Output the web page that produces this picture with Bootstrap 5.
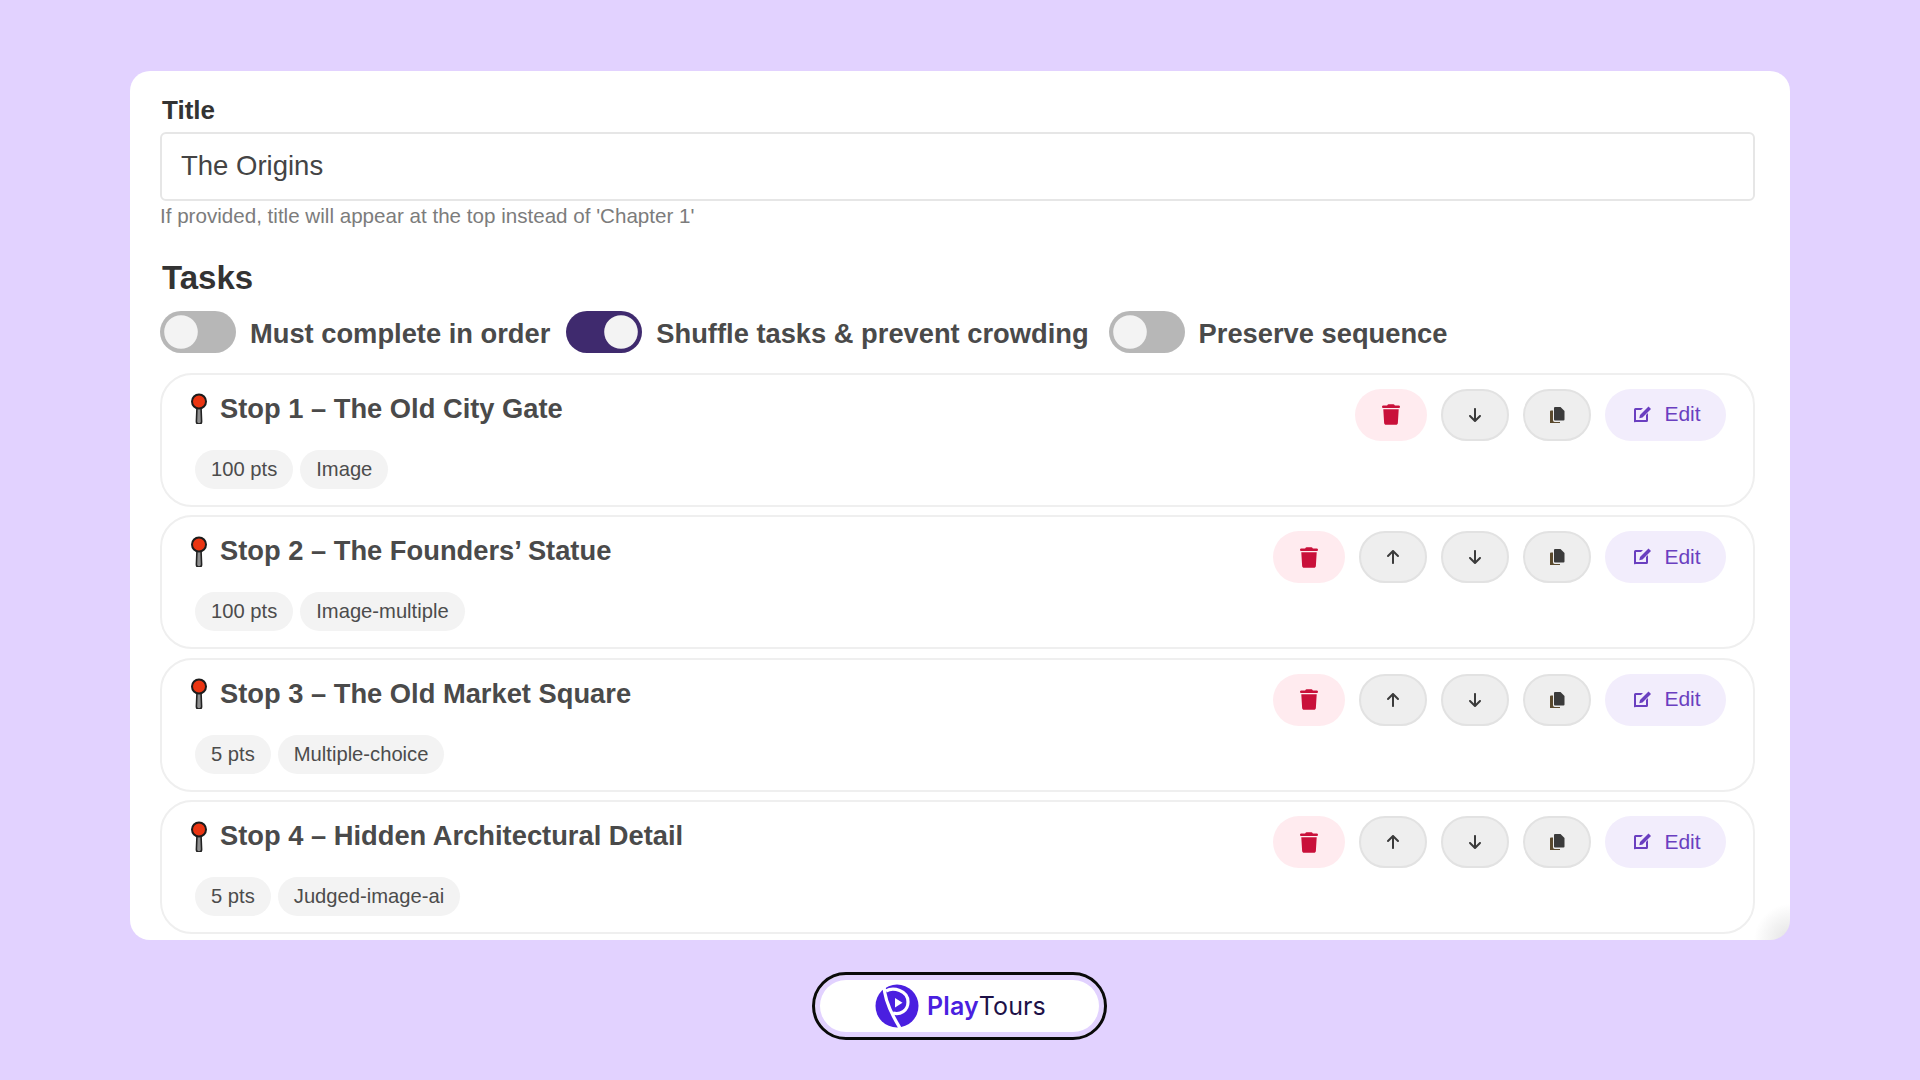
<!DOCTYPE html>
<html lang="en">
<head>
  <meta charset="UTF-8">
  <title>PlayTours tasks</title>
  <link href="https://cdn.jsdelivr.net/npm/bootstrap@5.3.0/dist/css/bootstrap.min.css" rel="stylesheet">
  <style>
    body {
      background-color: #e2d2ff;
      font-family: "Liberation Sans", Arial, sans-serif;
      color: #3a3a3a;
      height: 1080px;
      overflow: hidden;
      padding-top: 71px;
    }
    .sheet {
      width: 1660px;
      height: 869px;
      margin-left: 130px;
      padding: 23px 35px 0 30px;
      background: radial-gradient(circle at 100% 100%, #e2e2e2 0, #fff 36px);
      border-radius: 20px;
      overflow: hidden;
    }
    .field-label {
      font-size: 26px;
      font-weight: 700;
      line-height: 32px;
      margin: 0 0 6px 2px;
      color: #333;
    }
    .title-input.form-control {
      height: 69px;
      font-size: 27.5px;
      padding: 0 19px 2px;
      color: #444;
      border: 2px solid #e6e6e6;
      border-radius: 6px;
    }
    .hint {
      font-size: 20.6px;
      line-height: 24px;
      color: #7c7c7c;
      margin-top: 3px;
    }
    .tasks-head {
      font-size: 33px;
      font-weight: 700;
      line-height: 40px;
      margin: 30px 0 12px 2px;
      color: #333;
    }
    .switch-row { margin-bottom: 18px; }
    .toggle-item.form-check { padding: 0; margin: 0 16px 0 0; min-height: 0; }
    .toggle-item.toggle-wide.form-check { margin-right: 20px; }
    .toggle-item .form-check-input {
      width: 76px;
      height: 42px;
      margin: 0;
      float: none;
      border: 0;
      background-color: #b7b7b7;
      background-image: url("data:image/svg+xml,%3csvg xmlns='http://www.w3.org/2000/svg' viewBox='-4 -4 8 8'%3e%3ccircle r='3.2' fill='%23f3f3f3'/%3e%3c/svg%3e");
    }
    .toggle-item .form-check-input:checked { background-color: #3f2a6e; }
    .toggle-label {
      font-size: 27.3px;
      font-weight: 700;
      color: #4a4a4a;
      margin: 4px 0 0 14px;
    }
    .stop-box {
      height: 134px;
      margin-bottom: 8.5px;
      padding: 14px 27px 0 28px;
      border: 2px solid #efefef;
      border-radius: 32px;
    }
    .stop-main { padding-top: 2px; }
    .stop-name {
      font-size: 27.3px;
      font-weight: 700;
      line-height: 36px;
      margin: 0;
      color: #4a4a4a;
    }
    .pin-icon { width: 18px; height: 31px; margin-right: 12px; }
    .chip-row { margin: 23px 0 0 5px; gap: 7px; }
    .tag-chip {
      height: 39px;
      padding: 0 16px;
      font-size: 20.2px;
      line-height: 39px;
      border-radius: 20px;
      background: #f3f3f3;
      color: #4c4c4c;
    }
    .act-group { gap: 14px; }
    .act-btn.btn {
      height: 52px;
      padding: 0;
      border-radius: 26px;
      display: flex;
      align-items: center;
      justify-content: center;
    }
    .act-del.btn { width: 72px; background: #ffebef; border: 0; }
    .act-del svg { width: 18px; height: 21px; fill: #c9103a; }
    .act-move.btn { width: 68px; background: #eeeeee; border: 2px solid #e2e2e2; }
    .act-move svg { width: 12px; height: 16px; fill: #3b3b3b; }
    .act-copy svg { width: 15px; height: 16px; fill: #3b3b3b; }
    .act-edit.btn {
      width: 121px;
      gap: 12px;
      padding-left: 3px;
      padding-bottom: 2px;
      background: #f2edfc;
      border: 0;
      color: #6a3fc0;
      font-size: 21px;
    }
    .act-edit svg { width: 19px; height: 18px; fill: #6a3fc0; }
    .brand-pill {
      width: 295px;
      height: 68px;
      margin: 32px 0 0 812px;
      gap: 8px;
      padding-left: 2px;
      background: #fff;
      border: 3px solid #0a0a0a;
      border-radius: 34px;
      box-shadow: inset 0 0 0 5px #e2d2ff;
    }
    .brand-pill svg { width: 44px; height: 44px; }
    .brand-name {
      font-family: Inter, "Liberation Sans", sans-serif;
      font-size: 25px;
      letter-spacing: .1px;
      padding-top: 2px;
      color: #1d1147;
    }
    .brand-name b { color: #4a1fe0; font-weight: 600; }
  </style>
</head>
<body>
  <svg width="0" height="0" class="d-block position-absolute">
    <defs>
      <symbol id="ic-pin" viewBox="0 0 18 31">
        <path d="M7 14h4l.6 14.5a2.6 2.6 0 0 1-5.200 0z" fill="#8f8f8f" stroke="#222" stroke-width="1.600"/>
        <circle cx="9" cy="8.500" r="7" fill="#ea3512" stroke="#1c1c1c" stroke-width="2"/>
      </symbol>
      <symbol id="ic-trash" viewBox="0 0 448 512">
        <path d="M135.2 17.7L128 32H32C14.3 32 0 46.3 0 64S14.3 96 32 96H416c17.7 0 32-14.3 32-32s-14.3-32-32-32H320l-7.2-14.3C307.4 6.8 296.3 0 284.200 0H163.800c-12.100 0-23.200 6.800-28.600 17.700zM416 128H32L53.200 467c1.600 25.300 22.600 45 47.900 45H346.900c25.300 0 46.300-19.700 47.900-45L416 128z"/>
      </symbol>
      <symbol id="ic-down" viewBox="0 0 384 512">
        <path d="M169.400 470.600c12.500 12.500 32.800 12.500 45.300 0l160-160c12.500-12.500 12.500-32.800 0-45.300s-32.800-12.500-45.300 0L224 370.800 224 64c0-17.700-14.300-32-32-32s-32 14.300-32 32l0 306.700L54.600 265.400c-12.500-12.500-32.800-12.500-45.300 0s-12.500 32.800 0 45.300l160 160z"/>
      </symbol>
      <symbol id="ic-up" viewBox="0 0 384 512">
        <path d="M214.600 41.400c-12.500-12.500-32.800-12.500-45.300 0l-160 160c-12.500 12.500-12.500 32.800 0 45.300s32.800 12.500 45.300 0L160 141.200V448c0 17.700 14.300 32 32 32s32-14.300 32-32V141.200L329.400 246.600c12.500 12.500 32.800 12.500 45.300 0s12.500-32.800 0-45.300l-160-160z"/>
      </symbol>
      <symbol id="ic-copy" viewBox="0 0 15 16">
        <path d="M5 0h5.500L14.500 4v8.500a1 1 0 0 1-1 1H5a1 1 0 0 1-1-1V1a1 1 0 0 1 1-1z"/>
        <path d="M0 4.500a1 1 0 0 1 1-1h2v9.800a1.700 1.700 0 0 0 1.700 1.700H10v.8a.8.8 0 0 1-.8.8H1a1 1 0 0 1-1-1z" fill="#5b4a2e"/>
      </symbol>
      <symbol id="ic-edit" viewBox="0 0 19 18">
        <path d="M2.500 3H10L8 5H3v10h10v-5l2-2v7.500a1.500 1.500 0 0 1-1.500 1.500h-11A1.500 1.500 0 0 1 1 17V4.500A1.500 1.500 0 0 1 2.500 3z"/>
        <path d="M15.500 1.500l2.500 2.500-8.500 8.500-3.200.7.700-3.200z"/>
      </symbol>
    </defs>
  </svg>

  <div class="sheet">
    <div class="field-label">Title</div>
    <input type="text" class="form-control title-input" value="The Origins">
    <div class="hint">If provided, title will appear at the top instead of 'Chapter 1'</div>

    <div class="tasks-head">Tasks</div>
    <div class="switch-row d-flex align-items-center">
      <div class="form-check form-switch toggle-item d-flex align-items-center">
        <input class="form-check-input" type="checkbox" role="switch" id="sw1">
        <label class="toggle-label" for="sw1">Must complete in order</label>
      </div>
      <div class="form-check form-switch toggle-item toggle-wide d-flex align-items-center">
        <input class="form-check-input" type="checkbox" role="switch" id="sw2" checked>
        <label class="toggle-label" for="sw2">Shuffle tasks &amp; prevent crowding</label>
      </div>
      <div class="form-check form-switch toggle-item d-flex align-items-center">
        <input class="form-check-input" type="checkbox" role="switch" id="sw3">
        <label class="toggle-label" for="sw3">Preserve sequence</label>
      </div>
    </div>

    <div class="stop-box d-flex justify-content-between align-items-start">
      <div class="stop-main">
        <div class="d-flex align-items-center"><svg class="pin-icon"><use href="#ic-pin"/></svg><h5 class="stop-name">Stop 1 – The Old City Gate</h5></div>
        <div class="chip-row d-flex"><span class="tag-chip">100 pts</span><span class="tag-chip">Image</span></div>
      </div>
      <div class="d-flex act-group">
        <button class="btn act-btn act-del"><svg><use href="#ic-trash"/></svg></button>
        <button class="btn act-btn act-move"><svg><use href="#ic-down"/></svg></button>
        <button class="btn act-btn act-move act-copy"><svg><use href="#ic-copy"/></svg></button>
        <button class="btn act-btn act-edit"><svg><use href="#ic-edit"/></svg>Edit</button>
      </div>
    </div>

    <div class="stop-box d-flex justify-content-between align-items-start">
      <div class="stop-main">
        <div class="d-flex align-items-center"><svg class="pin-icon"><use href="#ic-pin"/></svg><h5 class="stop-name">Stop 2 – The Founders’ Statue</h5></div>
        <div class="chip-row d-flex"><span class="tag-chip">100 pts</span><span class="tag-chip">Image-multiple</span></div>
      </div>
      <div class="d-flex act-group">
        <button class="btn act-btn act-del"><svg><use href="#ic-trash"/></svg></button>
        <button class="btn act-btn act-move"><svg><use href="#ic-up"/></svg></button>
        <button class="btn act-btn act-move"><svg><use href="#ic-down"/></svg></button>
        <button class="btn act-btn act-move act-copy"><svg><use href="#ic-copy"/></svg></button>
        <button class="btn act-btn act-edit"><svg><use href="#ic-edit"/></svg>Edit</button>
      </div>
    </div>

    <div class="stop-box d-flex justify-content-between align-items-start">
      <div class="stop-main">
        <div class="d-flex align-items-center"><svg class="pin-icon"><use href="#ic-pin"/></svg><h5 class="stop-name">Stop 3 – The Old Market Square</h5></div>
        <div class="chip-row d-flex"><span class="tag-chip">5 pts</span><span class="tag-chip">Multiple-choice</span></div>
      </div>
      <div class="d-flex act-group">
        <button class="btn act-btn act-del"><svg><use href="#ic-trash"/></svg></button>
        <button class="btn act-btn act-move"><svg><use href="#ic-up"/></svg></button>
        <button class="btn act-btn act-move"><svg><use href="#ic-down"/></svg></button>
        <button class="btn act-btn act-move act-copy"><svg><use href="#ic-copy"/></svg></button>
        <button class="btn act-btn act-edit"><svg><use href="#ic-edit"/></svg>Edit</button>
      </div>
    </div>

    <div class="stop-box d-flex justify-content-between align-items-start">
      <div class="stop-main">
        <div class="d-flex align-items-center"><svg class="pin-icon"><use href="#ic-pin"/></svg><h5 class="stop-name">Stop 4 – Hidden Architectural Detail</h5></div>
        <div class="chip-row d-flex"><span class="tag-chip">5 pts</span><span class="tag-chip">Judged-image-ai</span></div>
      </div>
      <div class="d-flex act-group">
        <button class="btn act-btn act-del"><svg><use href="#ic-trash"/></svg></button>
        <button class="btn act-btn act-move"><svg><use href="#ic-up"/></svg></button>
        <button class="btn act-btn act-move"><svg><use href="#ic-down"/></svg></button>
        <button class="btn act-btn act-move act-copy"><svg><use href="#ic-copy"/></svg></button>
        <button class="btn act-btn act-edit"><svg><use href="#ic-edit"/></svg>Edit</button>
      </div>
    </div>
  </div>

  <div class="brand-pill d-flex align-items-center justify-content-center">
    <svg viewBox="0 0 44 44">
      <circle cx="22" cy="22" r="21.500" fill="#4a1fe0"/>
      <path d="M9 1c0 14 8 30 16 43" fill="none" stroke="#fff" stroke-width="3.200"/>
      <path d="M11 7C18 3 33 6 33 18c0 9-8 13-15 11" fill="none" stroke="#fff" stroke-width="3.200"/>
      <path d="M20 14l7.500 4.800-7.500 4.800z" fill="#fff"/>
    </svg>
    <span class="brand-name"><b>Play</b>Tours</span>
  </div>

  <script src="https://cdn.jsdelivr.net/npm/bootstrap@5.3.0/dist/js/bootstrap.bundle.min.js"></script>
</body>
</html>
